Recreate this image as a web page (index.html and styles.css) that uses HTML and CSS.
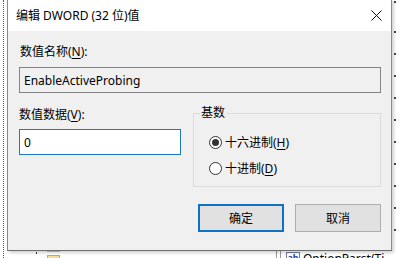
FILE: index.html
```html
<!DOCTYPE html>
<html lang="zh-CN">
<head>
<meta charset="utf-8">
<title>编辑 DWORD (32 位)值</title>
<link rel="stylesheet" href="styles.css">
</head>
<body>
<div class="desktop">
  <div class="bg-dotline"></div>
  <div class="bg-dots"></div>
  <div class="bg-folder f1"></div>
  <div class="bg-folder f2"></div>
  <div class="bg-pip"></div>
  <div class="bg-list">
    <span class="bg-sep"></span><span class="bg-sep"></span>
    <span class="bg-icon">ab</span><span class="bg-text">OptionParst(Ti</span>
  </div>

  <div class="dialog">
    <div class="titlebar">
      <span class="title">编辑 DWORD (32 位)值</span>
      <span class="close">
        <svg width="11" height="11" viewBox="0 0 11 11"><path d="M0.5 0.5L10.5 10.5M10.5 0.5L0.5 10.5" stroke="#111" stroke-width="1" fill="none"/></svg>
      </span>
    </div>
    <div class="body">
      <div class="label">数值名称(<u>N</u>):</div>
      <div class="namebox">EnableActiveProbing</div>
      <div class="row">
        <div class="datacol">
          <div class="label l2">数值数据(<u>V</u>):</div>
          <div class="databox">0</div>
        </div>
        <fieldset class="group">
          <legend>基数</legend>
          <div class="radio-row"><span class="radio checked"></span><span>十六进制(<u>H</u>)</span></div>
          <div class="radio-row r2"><span class="radio"></span><span>十进制(<u>D</u>)</span></div>
        </fieldset>
      </div>
      <div class="buttons">
        <div class="btn default">确定</div>
        <div class="btn">取消</div>
      </div>
    </div>
  </div>
</div>
</body>
</html>
```
FILE: styles.css
```css
html, body {
  margin: 0;
  padding: 0;
  background: #ffffff;
}
body {
  width: 399px;
  height: 258px;
  overflow: hidden;
  font-family: "Noto Sans", "Noto Sans CJK SC", sans-serif;
  font-size: 12px;
  color: #000;
}
.desktop {
  position: relative;
  width: 399px;
  height: 258px;
  overflow: hidden;
}
.bg-dotline {
  position: absolute;
  left: 3px;
  top: 0;
  bottom: 0;
  border-left: 1px dotted #555;
}
.bg-dots {
  position: absolute;
  left: 394px;
  top: 0;
  width: 2px;
  height: 250px;
  background: repeating-linear-gradient(to bottom, transparent 0 31px, #444 31px 33px, transparent 33px 21.6px);
}
.bg-dots {
  background: repeating-linear-gradient(to bottom, transparent 0px, transparent 20px, #444 20px, #444 22px);
  background-position: 0 11px;
}
.bg-folder {
  position: absolute;
  left: 47px;
  width: 13px;
  background: #dcc37d;
}
.f1 { top: 249px; height: 3px; }
.f2 { top: 255px; height: 4px; border: 1px solid #c9ab55; box-sizing: border-box; background: #f1dc9a; }
.bg-pip {
  position: absolute;
  left: 36px;
  top: 252px;
  width: 1px;
  height: 2px;
  background: #333;
}
.bg-list {
  position: absolute;
  left: 276px;
  top: 250px;
  display: flex;
  align-items: flex-start;
  gap: 3px;
  height: 12px;
}
.bg-sep {
  width: 1px;
  height: 10px;
  background: #999;
}
.bg-icon {
  margin-left: 2px;
  width: 14px;
  height: 10px;
  margin-top: 2px;
  border: 1px solid #7a7a9a;
  color: #1a3b9c;
  font-size: 9px;
  font-weight: bold;
  line-height: 9px;
  text-align: center;
  box-sizing: border-box;
}
.bg-text {
  margin-top: 1px;
  font-size: 12px;
  line-height: 16px;
}
.dialog {
  position: absolute;
  left: 7px;
  top: -1px;
  width: 385px;
  height: 252px;
  box-sizing: border-box;
  border: 1px solid #8a8a8a;
  border-bottom-color: #6e6e6e;
  box-shadow: 2px 2px 3px rgba(0, 0, 0, 0.18);
  background: #f0f0f0;
  display: flex;
  flex-direction: column;
}
.titlebar {
  height: 31px;
  background: #ffffff;
  display: flex;
  align-items: center;
  justify-content: space-between;
  padding-left: 8px;
  flex: none;
}
.title {
  line-height: 16px;
  margin-top: 0px;
}
.close {
  width: 29px;
  height: 31px;
  display: flex;
  align-items: center;
  justify-content: center;
}
.body {
  flex: 1;
  padding: 13px 10px 0 11px;
}
.label {
  line-height: 16px;
  padding-left: 1px;
}
u {
  text-decoration: underline;
  text-underline-offset: 2px;
}
.namebox {
  margin-top: 7px;
  height: 26px;
  box-sizing: border-box;
  border: 1px solid #848484;
  background: #f0f0f0;
  padding-left: 4px;
  display: flex;
  align-items: center;
}
.row {
  margin-top: 12px;
  display: flex;
  align-items: flex-start;
  gap: 12px;
}
.datacol {
  width: 162px;
  flex: none;
}
.l2 {
  margin-top: 2px;
  padding-left: 0;
}
.databox {
  margin-top: 6px;
  height: 26px;
  box-sizing: border-box;
  border: 1px solid #1f78c1;
  background: #ffffff;
  padding-left: 4px;
  display: flex;
  align-items: center;
}
.group {
  flex: 1;
  margin: 0;
  min-width: 0;
  border: 1px solid #dcdcdc;
  padding: 13px 0 10px 6px;
}
.group legend {
  padding: 0 1px;
  line-height: 16px;
}
.radio-row {
  display: flex;
  align-items: center;
  gap: 3px;
  height: 16px;
  padding-left: 9px;
}
.r2 {
  margin-top: 10px;
}
.radio {
  width: 13px;
  height: 13px;
  box-sizing: border-box;
  border: 1px solid #333;
  border-radius: 50%;
  background: #fff;
  display: flex;
  align-items: center;
  justify-content: center;
}
.radio.checked::after {
  content: "";
  width: 7px;
  height: 7px;
  border-radius: 50%;
  background: #333;
}
.buttons {
  margin-top: 17px;
  display: flex;
  justify-content: flex-end;
  gap: 11px;
}
.btn {
  width: 86px;
  height: 28px;
  box-sizing: border-box;
  border: 1px solid #adadad;
  background: #e1e1e1;
  display: flex;
  align-items: center;
  justify-content: center;
}
.btn.default {
  border: 2px solid #0d72c4;
}
```
